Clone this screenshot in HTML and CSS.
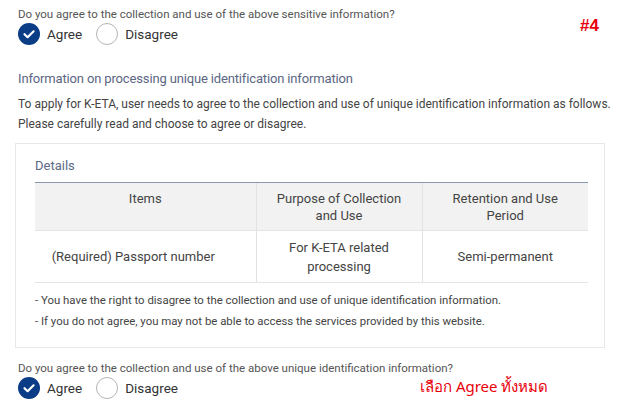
FILE: index.html
```html
<!DOCTYPE html>
<html>
<head>
<meta charset="utf-8">
<link rel="stylesheet" href="styles.css">
</head>
<body>
<div class="page">
  <div class="question">
    <p class="q-text">Do you agree to the collection and use of the above sensitive information?</p>
    <div class="radios">
      <span class="radio checked"><svg viewBox="0 0 22 22" width="22" height="22"><circle cx="11" cy="11" r="11" fill="#0b3d86"/><path d="M6.5 11.2 L9.6 14.2 L15.6 8.3" fill="none" stroke="#fff" stroke-width="2.2" stroke-linecap="round" stroke-linejoin="round"/></svg></span>
      <span class="label">Agree</span>
      <span class="radio empty"></span>
      <span class="label">Disagree</span>
    </div>
    <span class="note note-top">#4</span>
  </div>

  <h2 class="section-title">Information on processing unique identification information</h2>
  <p class="desc">To apply for K-ETA, user needs to agree to the collection and use of unique identification information as follows.</p>
  <p class="desc">Please carefully read and choose to agree or disagree.</p>

  <div class="box">
    <div class="box-title">Details</div>
    <table class="details">
      <colgroup>
        <col class="c1">
        <col class="c2">
        <col class="c3">
      </colgroup>
      <thead>
        <tr>
          <th>Items</th>
          <th>Purpose of Collection<br>and Use</th>
          <th>Retention and Use<br>Period</th>
        </tr>
      </thead>
      <tbody>
        <tr>
          <td class="item">(Required) Passport number</td>
          <td>For K-ETA related<br>processing</td>
          <td>Semi-permanent</td>
        </tr>
      </tbody>
    </table>
    <p class="bullet">- You have the right to disagree to the collection and use of unique identification information.</p>
    <p class="bullet">- If you do not agree, you may not be able to access the services provided by this website.</p>
  </div>

  <div class="question bottom">
    <p class="q-text">Do you agree to the collection and use of the above unique identification information?</p>
    <div class="radios">
      <span class="radio checked"><svg viewBox="0 0 22 22" width="22" height="22"><circle cx="11" cy="11" r="11" fill="#0b3d86"/><path d="M6.5 11.2 L9.6 14.2 L15.6 8.3" fill="none" stroke="#fff" stroke-width="2.2" stroke-linecap="round" stroke-linejoin="round"/></svg></span>
      <span class="label">Agree</span>
      <span class="radio empty"></span>
      <span class="label">Disagree</span>
    </div>
    <span class="note note-bottom">เลือก Agree ทั้งหมด</span>
  </div>
</div>
</body>
</html>
```

FILE: styles.css
```css
html, body {
  margin: 0;
  padding: 0;
  background: #fff;
}
body {
  font-family: Roboto, "Noto Sans", sans-serif;
  color: #555;
}
.page {
  padding: 6px 20px 0 18px;
}
.question {
  position: relative;
}
.q-text {
  margin: 0;
  font-size: 11.5px;
  line-height: 16px;
  color: #555;
}
.radios {
  display: flex;
  align-items: center;
  height: 24px;
}
.radio {
  width: 22px;
  height: 22px;
  display: inline-block;
  box-sizing: border-box;
  flex: none;
}
.radio svg {
  display: block;
}
.radio.empty {
  border: 1px solid #b5b5b5;
  border-radius: 50%;
  margin-left: 14px;
}
.label {
  font-size: 13.5px;
  color: #333;
  margin-left: 7px;
}
.note {
  position: absolute;
  color: #e8000b;
  font-weight: bold;
  font-family: "Liberation Sans", Arial, sans-serif;
}
.note-top {
  right: 20px;
  top: 10px;
  font-size: 17px;
}
.note-bottom {
  left: 402px;
  top: 15px;
  font-size: 15px;
  font-weight: normal;
  font-family: "Noto Sans", "Liberation Sans", sans-serif;
}
.section-title {
  margin: 24px 0 0 0;
  font-size: 13px;
  line-height: 18px;
  font-weight: normal;
  letter-spacing: -0.15px;
  color: #5b6683;
}
.desc {
  margin: 0;
  font-size: 12px;
  line-height: 20px;
  color: #444;
}
.section-title + .desc {
  margin-top: 6px;
}
.box {
  margin: 9px 14px 0 -3px;
  border: 1px solid #e8e8e8;
  padding: 14px 16px 15px 19px;
}
.box-title {
  font-size: 13px;
  line-height: 16px;
  color: #5b6a87;
  margin-bottom: 8px;
}
.details {
  width: 100%;
  table-layout: fixed;
  border-collapse: collapse;
  font-size: 13px;
  color: #444;
}
.details th {
  font-weight: normal;
  background: #f2f2f2;
  border-top: 1px solid #8b99ae;
  border-bottom: 1px solid #e4e4e4;
  height: 48px;
  box-sizing: border-box;
  padding: 7px 6px 0;
  line-height: 17px;
  text-align: center;
  vertical-align: top;
}
.details td {
  height: 51px;
  padding: 0 6px;
  line-height: 19px;
  text-align: center;
  border-bottom: 1px solid #e4e4e4;
}
.details td.item {
  padding-right: 30px;
}
.details th + th,
.details td + td {
  border-left: 1px solid #e2e2e2;
}
.c1 { width: 221px; }
.c2 { width: 166px; }
.bullet {
  margin: 0;
  font-size: 11.4px;
  line-height: 21px;
  color: #444;
}
.details + .bullet {
  margin-top: 7px;
}
.question.bottom {
  margin-top: 12px;
}
```
